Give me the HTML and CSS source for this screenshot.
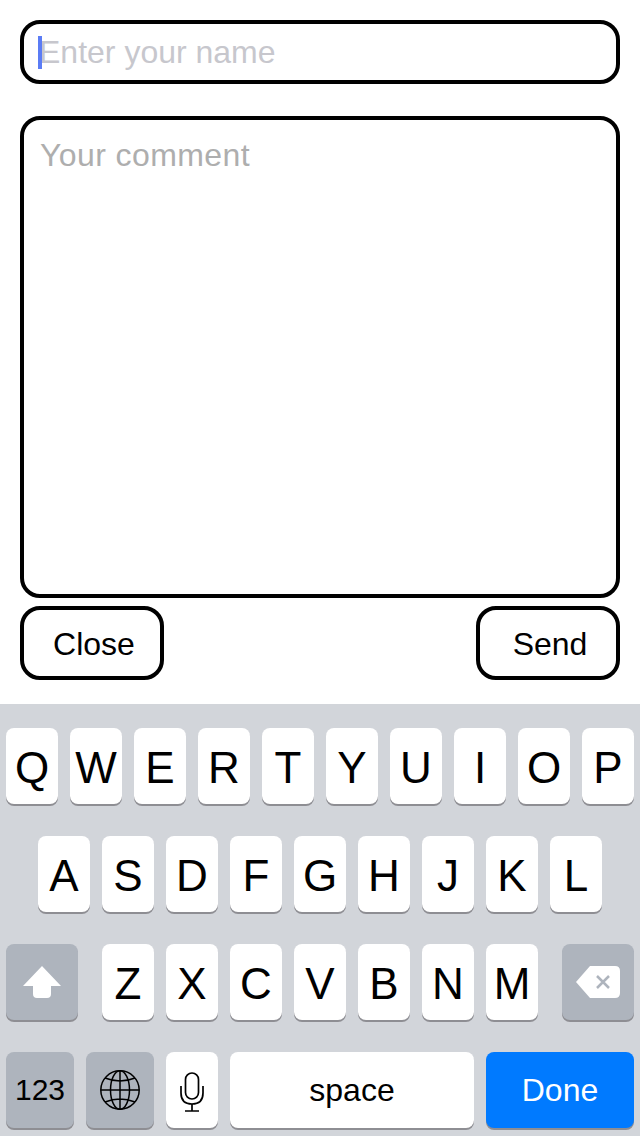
FILE: index.html
```html
<!DOCTYPE html>
<html>
  <head>
    <title>Comment</title>
    <link rel="stylesheet" href="styles.css">
  </head>
  <body>
    <form class="comment-form">
      <div class="name-box">
        <span class="caret"></span>
        <input class="name-input" placeholder="Enter your name" />
      </div>
      <textarea class="comment-input" placeholder="Your comment"></textarea>
      <div class="actions">
        <button type="button" class="action">Close</button>
        <button type="button" class="action">Send</button>
      </div>
    </form>

    <div class="keyboard">
      <div class="row">
        <span class="key">Q</span><span class="key">W</span><span class="key">E</span><span class="key">R</span><span class="key">T</span><span class="key">Y</span><span class="key">U</span><span class="key">I</span><span class="key">O</span><span class="key">P</span>
      </div>
      <div class="row">
        <span class="key">A</span><span class="key">S</span><span class="key">D</span><span class="key">F</span><span class="key">G</span><span class="key">H</span><span class="key">J</span><span class="key">K</span><span class="key">L</span>
      </div>
      <div class="row row-shift">
        <span class="key key-dark key-side">
          <svg width="38" height="32" viewBox="0 0 38 32"><path d="M19 0 L38 20 H28 V28 Q28 32 24 32 H14 Q10 32 10 28 V20 H0 Z" fill="#fff"/></svg>
        </span>
        <div class="letters">
          <span class="key">Z</span><span class="key">X</span><span class="key">C</span><span class="key">V</span><span class="key">B</span><span class="key">N</span><span class="key">M</span>
        </div>
        <span class="key key-dark key-side">
          <svg width="44" height="32" viewBox="0 0 44 32">
            <path d="M14 0 H39 Q44 0 44 5 V27 Q44 32 39 32 H14 L0 16 Z" fill="#fff"/>
            <path d="M21 10 L33 22 M33 10 L21 22" stroke="#aeb4bd" stroke-width="2.5" fill="none"/>
          </svg>
        </span>
      </div>
      <div class="row row-bottom">
        <span class="key key-dark key-num">123</span>
        <span class="key key-dark key-num">
          <svg width="40" height="40" viewBox="0 0 40 40" fill="none" stroke="#000" stroke-width="1.5">
            <circle cx="20" cy="20" r="19.2"/>
            <ellipse cx="20" cy="20" rx="9.5" ry="19.2"/>
            <path d="M20 1 V39 M1 20 H39 M5 8 Q20 14 35 8 M5 32 Q20 26 35 32"/>
          </svg>
        </span>
        <span class="key">
          <svg width="24" height="40" viewBox="0 0 24 40" fill="none" stroke="#000" stroke-width="1.7">
            <rect x="5.5" y="1" width="13" height="26" rx="6.5"/>
            <path d="M1 14 V21 Q1 32 12 32 Q23 32 23 21 V14 M12 32 V39 M5 39 H19"/>
          </svg>
        </span>
        <span class="key key-space">space</span>
        <span class="key key-done">Done</span>
      </div>
    </div>
  </body>
</html>
```
FILE: styles.css
```css
* {
  box-sizing: border-box;
}
body {
  margin: 0;
  width: 640px;
  height: 1136px;
  overflow: hidden;
  background: #fff;
  font-family: "Liberation Sans", Arial, sans-serif;
}

.comment-form {
  height: 704px;
  padding: 20px 20px 0;
}
.name-box {
  position: relative;
  height: 64px;
  border: 4px solid #000;
  border-radius: 20px;
}
.caret {
  position: absolute;
  left: 14px;
  top: 12px;
  width: 4px;
  height: 33px;
  background: #5b7cf5;
}
.name-input {
  display: block;
  width: 100%;
  height: 100%;
  border: none;
  outline: none;
  background: none;
  padding: 0 0 0 15px;
  font: 32px "Liberation Sans", Arial, sans-serif;
}
.name-input::placeholder {
  color: #c7c7cd;
  opacity: 1;
}
.comment-input {
  display: block;
  width: 100%;
  height: 482px;
  margin-top: 32px;
  border: 4px solid #000;
  border-radius: 20px;
  outline: none;
  resize: none;
  padding: 17px 16px;
  font: 32px "Liberation Sans", Arial, sans-serif;
  letter-spacing: 0.4px;
}
.comment-input::placeholder {
  color: #aeaeae;
  opacity: 1;
}
.actions {
  display: flex;
  justify-content: space-between;
  margin-top: 8px;
}
.action {
  width: 144px;
  height: 74px;
  padding: 2px 0 0 4px;
  border: 4px solid #000;
  border-radius: 20px;
  background: #fff;
  color: #000;
  font: 32px "Liberation Sans", Arial, sans-serif;
}

.keyboard {
  height: 432px;
  padding: 24px 6px 0;
  background: #d2d5da;
}
.row {
  display: flex;
  justify-content: center;
  gap: 12px;
  margin-bottom: 32px;
}
.row-shift {
  justify-content: space-between;
}
.letters {
  display: flex;
  gap: 12px;
}
.key {
  display: flex;
  align-items: center;
  justify-content: center;
  width: 52px;
  height: 76px;
  border-radius: 8px;
  background: #fff;
  box-shadow: 0 2px 0 #8e8e93;
  color: #000;
  font-size: 44px;
  padding-top: 3px;
}
.key-dark {
  background: #aeb4bd;
}
.key-side {
  width: 72px;
  padding-top: 0;
}
.key-num {
  width: 68px;
  font-size: 30px;
  padding-top: 0;
}
.key-space {
  width: 244px;
  font-size: 32px;
  padding-top: 0;
}
.key-done {
  width: 148px;
  background: #007aff;
  color: #fff;
  font-size: 32px;
  padding-top: 0;
}
```
